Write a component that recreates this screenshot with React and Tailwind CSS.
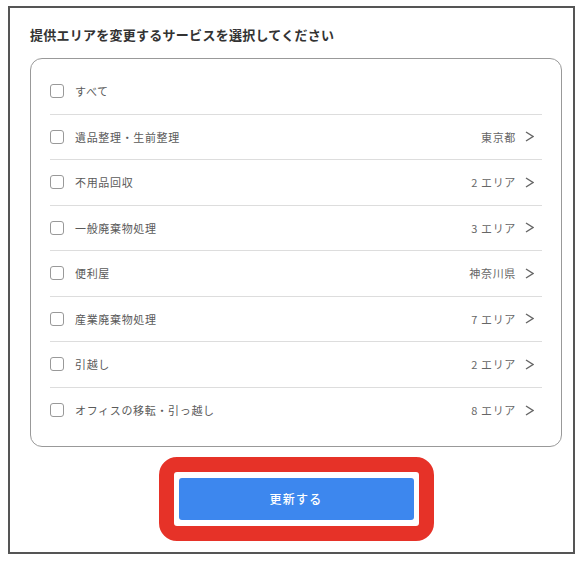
const services = [
  { name: 'すべて' },
  { name: '遺品整理・生前整理', area: '東京都' },
  { name: '不用品回収', area: '2 エリア' },
  { name: '一般廃棄物処理', area: '3 エリア' },
  { name: '便利屋', area: '神奈川県' },
  { name: '産業廃棄物処理', area: '7 エリア' },
  { name: '引越し', area: '2 エリア' },
  { name: 'オフィスの移転・引っ越し', area: '8 エリア' },
]

function Chevron() {
  return (
    <svg width="9" height="11" viewBox="0 0 9 11" fill="none">
      <polyline points="1,1 8,5.5 1,10" stroke="#666" strokeWidth="1.4" />
    </svg>
  )
}

export default function App() {
  return (
    <div
      className="w-[586px] h-[566px] bg-white pt-[6px] pl-2"
      style={{ fontFamily: '"Noto Sans CJK JP", "Noto Sans", sans-serif' }}
    >
      <div className="w-[567px] h-[548px] border-2 border-[#555] pl-5 pr-[11px] pt-[19px]">
        <h2 className="text-[13px] leading-[15px] font-bold text-[#333] tracking-[0.02em]">
          提供エリアを変更するサービスを選択してください
        </h2>

        <div className="mt-[16px] border border-[#999] rounded-[12px] px-[19px] pt-[10px] pb-[13px]">
          {services.map((s, i) => (
            <div
              key={s.name}
              className={`h-[45.5px] flex items-center justify-between ${i < services.length - 1 ? 'border-b border-[#ddd]' : ''}`}
            >
              <div className="flex items-center gap-[11px]">
                <span className="w-[14px] h-[14px] border-[1.5px] border-[#999] rounded-[3px]" />
                <span className="text-[11px] text-[#5a5a5a] tracking-[0.06em]">{s.name}</span>
              </div>
              {s.area && (
                <div className="flex items-center gap-[9px] pr-[8px]">
                  <span className="text-[11px] text-[#666] tracking-[0.06em]">{s.area}</span>
                  <Chevron />
                </div>
              )}
            </div>
          ))}
        </div>

        <div className="flex justify-center mt-[10px]">
          <div className="border-[15px] border-[#e63228] rounded-[18px] px-[5px] py-[6px] bg-white">
            <button className="w-[235px] h-[42px] bg-[#3d87ee] rounded-[3px] text-white text-[12px] font-medium tracking-[0.1em]">
              更新する
            </button>
          </div>
        </div>
      </div>
    </div>
  )
}
